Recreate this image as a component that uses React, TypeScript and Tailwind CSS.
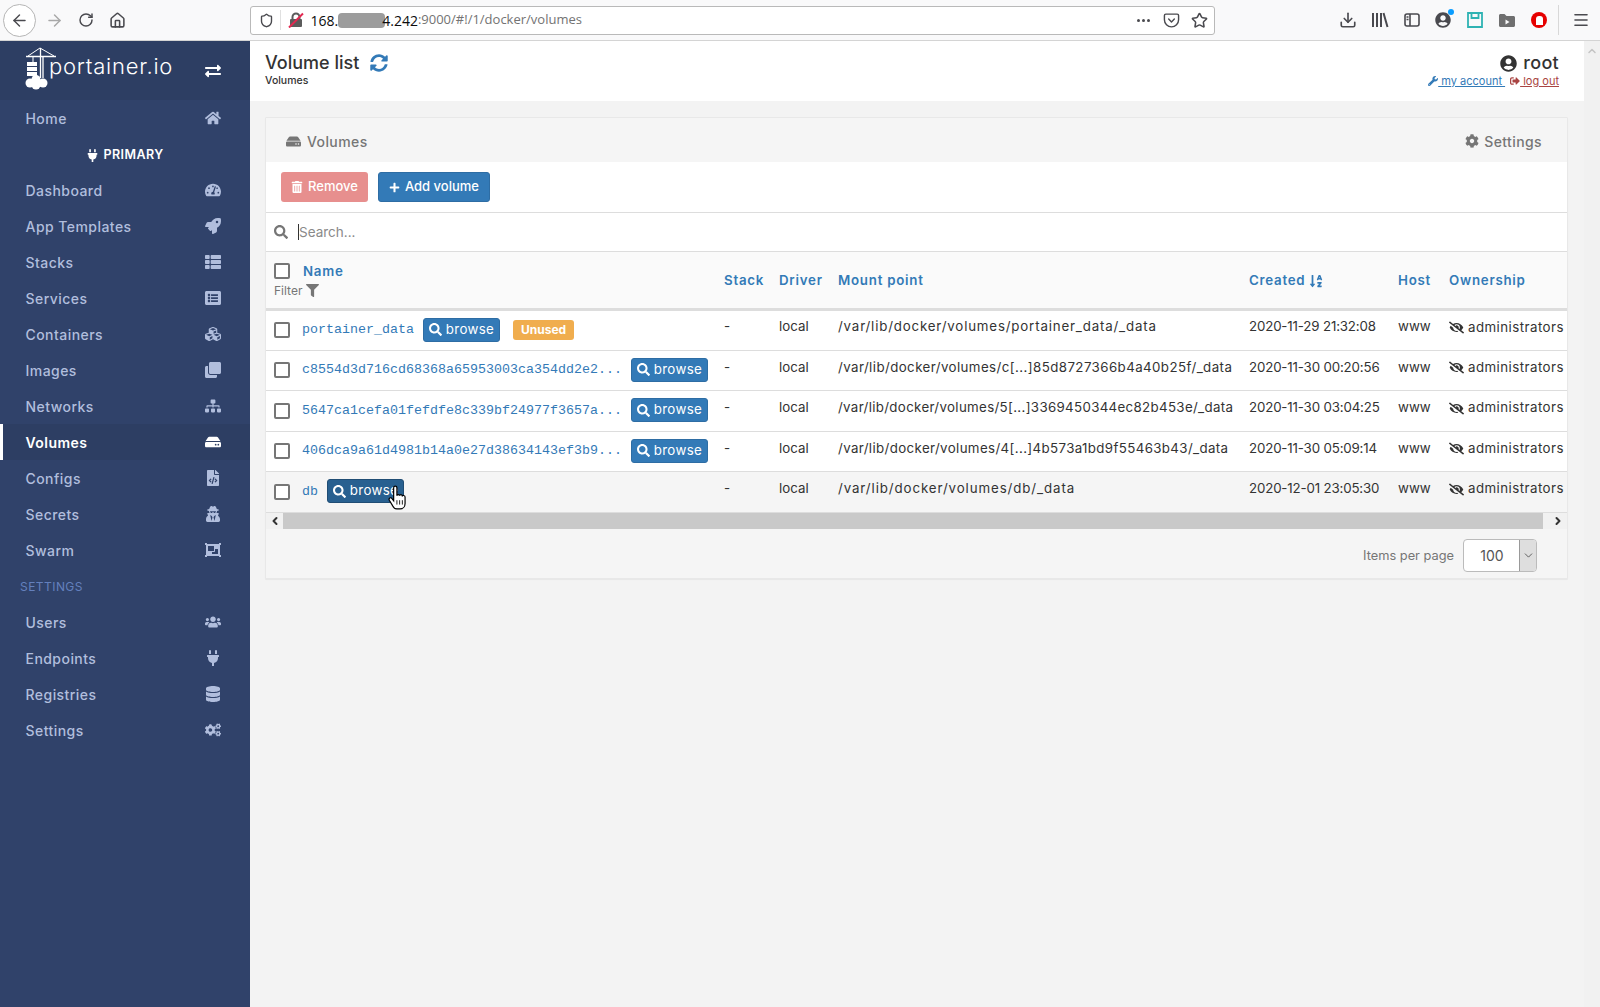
import type { ReactNode } from "react";
import {
  FaCog,
  FaCogs,
  FaClone,
  FaCubes,
  FaDatabase,
  FaExchangeAlt,
  FaEyeSlash,
  FaFileCode,
  FaFilter,
  FaHdd,
  FaHome,
  FaListAlt,
  FaObjectGroup,
  FaPlug,
  FaPlus,
  FaRocket,
  FaSearch,
  FaSignOutAlt,
  FaSitemap,
  FaSortAlphaDown,
  FaSyncAlt,
  FaTachometerAlt,
  FaThList,
  FaTrashAlt,
  FaUserCircle,
  FaUsers,
  FaUserSecret,
  FaWrench,
} from "react-icons/fa";
import {
  ArrowLeft,
  ArrowRight,
  ChevronDown,
  ChevronLeft,
  ChevronRight,
  ChevronUp,
  Download,
  Home,
  Menu,
  Pocket,
  RotateCw,
  Shield,
  Star,
} from "lucide-react";

const navTop = [
  { label: "Dashboard", icon: <FaTachometerAlt /> },
  { label: "App Templates", icon: <FaRocket /> },
  { label: "Stacks", icon: <FaThList /> },
  { label: "Services", icon: <FaListAlt /> },
  { label: "Containers", icon: <FaCubes /> },
  { label: "Images", icon: <FaClone /> },
  { label: "Networks", icon: <FaSitemap /> },
  { label: "Volumes", icon: <FaHdd />, active: true },
  { label: "Configs", icon: <FaFileCode /> },
  { label: "Secrets", icon: <FaUserSecret /> },
  { label: "Swarm", icon: <FaObjectGroup /> },
];

const navBottom = [
  { label: "Users", icon: <FaUsers /> },
  { label: "Endpoints", icon: <FaPlug /> },
  { label: "Registries", icon: <FaDatabase /> },
  { label: "Settings", icon: <FaCogs /> },
];

// mount paths with hex in them run narrower than the plain ones, hence the per-row tracking
const volumes = [
  {
    name: "portainer_data",
    mount: "/var/lib/docker/volumes/portainer_data/_data",
    mountClass: "tracking-[0.82px]",
    created: "2020-11-29 21:32:08",
    unused: true,
    height: "h-[41px]",
    cellPad: "pb-[7px]",
  },
  {
    name: "c8554d3d716cd68368a65953003ca354dd2e2...",
    mount: "/var/lib/docker/volumes/c[...]85d8727366b4a40b25f/_data",
    mountClass: "tracking-[0.42px]",
    created: "2020-11-30 00:20:56",
    height: "h-[40px]",
    cellPad: "pb-[5px]",
  },
  {
    name: "5647ca1cefa01fefdfe8c339bf24977f3657a...",
    mount: "/var/lib/docker/volumes/5[...]3369450344ec82b453e/_data",
    mountClass: "tracking-[0.33px]",
    created: "2020-11-30 03:04:25",
    height: "h-[41px]",
    cellPad: "pb-[5px]",
  },
  {
    name: "406dca9a61d4981b14a0e27d38634143ef3b9...",
    mount: "/var/lib/docker/volumes/4[...]4b573a1bd9f55463b43/_data",
    mountClass: "tracking-[0.37px]",
    created: "2020-11-30 05:09:14",
    height: "h-[40px]",
    cellPad: "pb-[5px]",
  },
  {
    name: "db",
    mount: "/var/lib/docker/volumes/db/_data",
    mountClass: "tracking-[0.9px]",
    created: "2020-12-01 23:05:30",
    hover: true,
    height: "h-[41px]",
    cellPad: "pb-[5px]",
  },
];

function Logo() {
  return (
    <svg width="34" height="46" viewBox="0 0 34 46" className="shrink-0 text-white">
      <path d="M1 9.500 H31" stroke="currentColor" strokeWidth="1.500" />
      <path d="M15 1 L3 9 M15 1 L29 9" fill="none" stroke="currentColor" strokeWidth="1" />
      <path d="M15.500 1 V31 M18 9 V31" fill="none" stroke="currentColor" strokeWidth="1.300" />
      <path d="M8 10 V15" stroke="currentColor" strokeWidth="1" />
      <rect x="2" y="15" width="10" height="4" fill="currentColor" />
      <rect x="2" y="20" width="10" height="4" fill="currentColor" />
      <rect x="2" y="25" width="10" height="4" fill="currentColor" />
      <circle cx="5" cy="36" r="4.500" fill="currentColor" />
      <circle cx="11" cy="32.500" r="4.500" fill="currentColor" />
      <circle cx="18" cy="36" r="4.500" fill="currentColor" />
      <circle cx="11" cy="38" r="4.500" fill="currentColor" />
    </svg>
  );
}

function NavRow({ label, icon, active }: { label: string; icon: ReactNode; active?: boolean }) {
  return (
    <div
      className={
        active
          ? "flex h-9 items-center justify-between border-l-[3px] border-white bg-[#2d3e63] pl-[22.5px] pr-[29px] font-semibold text-white"
          : "flex h-9 items-center justify-between pl-[25.5px] pr-[29px] font-medium text-[#b1bedd]"
      }
    >
      <span>{label}</span>
      <span className="flex w-4 justify-center text-[16px]">{icon}</span>
    </div>
  );
}

function Sidebar() {
  return (
    <aside className="w-[250px] shrink-0 bg-[#30426a] text-[14px] tracking-[0.45px]">
      <div className="flex h-[59px] items-center bg-[#2d3e63] pl-[25px] pr-[29px]">
        <div className="-mt-[1px]">
          <Logo />
        </div>
        <span className="-ml-[10px] -mt-[8px] text-[22px] font-light tracking-[0.75px] text-white">portainer.io</span>
        <span className="ml-auto flex w-4 justify-center text-[18px] text-white">
          <FaExchangeAlt />
        </span>
      </div>
      <NavRow label="Home" icon={<FaHome />} />
      <div className="flex h-9 items-center justify-center gap-1 pt-[2px] text-[12.5px] font-semibold text-white">
        <FaPlug className="text-[13px]" />
        <span>PRIMARY</span>
      </div>
      {navTop.map((item) => (
        <NavRow key={item.label} {...item} />
      ))}
      <div className="flex h-9 items-center pl-[20px] pt-[2px] text-[12px] text-[#6480bd]">SETTINGS</div>
      {navBottom.map((item) => (
        <NavRow key={item.label} {...item} />
      ))}
    </aside>
  );
}

function BrowserBar() {
  return (
    <div className="flex h-[41px] shrink-0 items-center border-b border-[#d4d4d4] bg-[#f9f9fa] pl-[3px] text-[#4a4a4f]">
      <div className="flex h-[33px] w-[33px] items-center justify-center rounded-full border border-[#b5b5b5] bg-white">
        <ArrowLeft size={19} strokeWidth={1.8} />
      </div>
      <ArrowRight size={19} strokeWidth={1.8} className="ml-[9px] text-[#a8a8a8]" />
      <RotateCw size={16} strokeWidth={2.2} className="ml-[14px]" />
      <Home size={17} strokeWidth={2.2} className="ml-[15px]" />
      <div className="ml-[123.5px] flex h-[29px] w-[965px] items-center rounded-[3px] border border-[#b9b9b9] bg-white pl-[8px] pr-[6px] text-[14px]">
        <Shield size={15} strokeWidth={2.2} />
        <div className="ml-[6px] h-5 w-px bg-[#e0e0e0]" />
        <svg width="16" height="16" viewBox="0 0 16 16" className="ml-[7px]">
          <path d="M4.500 7V5a3.500 3.500 0 0 1 7 0v2" fill="none" stroke="#5b5b5b" strokeWidth="2" />
          <rect x="2" y="7" width="12" height="8" rx="1" fill="#5b5b5b" />
          <path d="M1 15.500 L15 1.500" stroke="#e22850" strokeWidth="2" />
        </svg>
        <span className="ml-[7px] flex items-center font-['Open_Sans',sans-serif] text-[14px] text-[#0c0c0d]">
          168.
          <span className="mr-[-3px] inline-block h-[15px] w-[47px] rounded-[4px] bg-[#9c9c9c]" />
          4.242<span className="text-[13px] text-[#737373]">:9000/#!/1/docker/volumes</span>
        </span>
        <span className="ml-auto flex gap-[2px]">
          <i className="h-[3px] w-[3px] rounded-full bg-[#4a4a4f]" />
          <i className="h-[3px] w-[3px] rounded-full bg-[#4a4a4f]" />
          <i className="h-[3px] w-[3px] rounded-full bg-[#4a4a4f]" />
        </span>
        <Pocket size={17} strokeWidth={2} className="ml-[13px]" />
        <Star size={17} strokeWidth={2.2} className="ml-[11px]" />
      </div>
      <Download size={18} strokeWidth={2.2} className="ml-[124.5px]" />
      <svg width="18" height="16" viewBox="0 0 18 16" className="ml-[14px]" fill="none" stroke="currentColor" strokeWidth="2">
        <path d="M2 1v14M6 1v14M10 1v14M12.500 1l4 14" />
      </svg>
      <svg width="16" height="14" viewBox="0 0 16 14" className="ml-[15px]" fill="none" stroke="currentColor" strokeWidth="1.600">
        <rect x="1" y="1" width="14" height="12" rx="2" />
        <path d="M6 1v12M2.500 4h2M2.500 6.500h2" />
      </svg>
      <div className="relative ml-[15px] flex h-4 w-4 items-center justify-center">
        <FaUserCircle className="text-[16px]" />
        <div className="absolute -right-[3px] -top-[3px] h-[6px] w-[6px] rounded-full bg-[#0a9dff]" />
      </div>
      <svg width="16" height="16" viewBox="0 0 16 16" className="ml-[16px]" fill="none" stroke="#2fb3b3" strokeWidth="1.800">
        <path d="M1 1h14v14H1zM4.500 1v5h7V1" />
      </svg>
      <svg width="16" height="13" viewBox="0 0 16 13" className="ml-[16px]" fill="#6f6f6f">
        <path d="M0 1.500C0 .7.700 0 1.500 0h4l2 2h7c.8 0 1.500.7 1.500 1.500v8c0 .8-.7 1.500-1.500 1.500h-13C.7 13 0 12.300 0 11.500z" />
        <path d="M6.500 5.500v5l4-2.500z" fill="#f9f9fa" />
      </svg>
      <div className="ml-[16px] flex h-4 w-4 items-center justify-center rounded-full bg-[#e60000]">
        <div className="h-[9px] w-[7px] rounded-t-[3px] bg-white" />
      </div>
      <div className="ml-[11px] h-[30px] w-px bg-[#d8d8d8]" />
      <Menu size={18} strokeWidth={2.2} className="ml-[13px]" />
    </div>
  );
}

function Browse({ hover }: { hover?: boolean }) {
  return (
    <span
      className={
        hover
          ? "relative inline-flex h-[24px] w-[77px] items-center justify-center gap-[4px] rounded-[3px] border border-[#204d74] bg-[#286090] tracking-[0.35px] text-white"
          : "inline-flex h-[24px] w-[77px] items-center justify-center gap-[4px] rounded-[3px] border border-[#2e6da4] bg-[#337ab7] tracking-[0.35px] text-white"
      }
    >
      <FaSearch className="text-[13px]" />
      browse
      {hover && (
        <svg width="20" height="25" viewBox="2 0 16 23" className="absolute left-[60px] top-[5px]">
          <path
            d="M6 2.500c0-2 3-2 3 0V10c0-1.500 2.500-1.500 2.500 0 0-1.500 2.500-1.500 2.500 0.500 0-1.500 2.500-1 2.500 0.500V17c0 3-2 5-4.500 5H9c-2 0-3-1-4-3l-3-5c-1-2 1.500-3 2.500-1.500L6 14.500z"
            fill="#fff"
            stroke="#000"
            strokeWidth="1.100"
          />
          <path d="M9 14v4M11.500 14v4M14 14v4" stroke="#000" strokeWidth="0.800" />
        </svg>
      )}
    </span>
  );
}

function Checkbox() {
  return <span className="inline-block h-[16px] w-[16px] shrink-0 rounded-[2px] border-2 border-[#767676] bg-white" />;
}

function VolumeTable() {
  return (
    <table className="w-[1321px] table-fixed border-collapse text-left text-[13.3px] text-[#333]">
      <colgroup>
        <col className="w-[450px]" />
        <col className="w-[55px]" />
        <col className="w-[59px]" />
        <col className="w-[411px]" />
        <col className="w-[149px]" />
        <col className="w-[51px]" />
        <col />
      </colgroup>
      <thead>
        <tr className="h-[57px] border-b-[3px] border-[#ddd] bg-[#fafafa] tracking-[0.75px] text-[#337ab7]">
          <th className="pl-2 pt-[2px] font-semibold">
            <div className="flex items-center gap-[13px]">
              <span className="-mt-[2px] flex">
                <Checkbox />
              </span>
              <span>Name</span>
            </div>
            <div className="flex items-center gap-1 text-[12px] font-normal tracking-normal text-[#767676]">
              Filter <FaFilter className="text-[13px]" />
            </div>
          </th>
          <th className="pl-2 pt-[2px] font-semibold">Stack</th>
          <th className="pl-2 pt-[2px] font-semibold">Driver</th>
          <th className="pl-2 pt-[2px] font-semibold">Mount point</th>
          <th className="pl-2 pt-[2px] font-semibold">
            <span className="inline-flex items-center gap-1">
              Created <FaSortAlphaDown className="text-[14px]" />
            </span>
          </th>
          <th className="pl-2 pt-[2px] font-semibold">Host</th>
          <th className="pl-2 pt-[2px] font-semibold">Ownership</th>
        </tr>
      </thead>
      <tbody>
        {volumes.map((v) => (
          <tr key={v.name} className={`${v.height} border-b border-[#ddd] ${v.hover ? "bg-[#f5f5f5]" : "bg-white"}`}>
            <td className="pl-2">
              <div className="flex items-center">
                <Checkbox />
                <span className="ml-[12px] font-['Liberation_Mono',monospace] text-[13.33px] text-[#337ab7]">{v.name}</span>
                <span className="ml-[9px]">
                  <Browse hover={v.hover} />
                </span>
                {v.unused && (
                  <span className="-mt-[1px] ml-[13px] rounded-[3px] bg-[#f0ad4e] px-[8px] py-[1px] text-[12px] font-bold text-white">
                    Unused
                  </span>
                )}
              </div>
            </td>
            <td className={`${v.cellPad} pl-2`}>-</td>
            <td className={`${v.cellPad} pl-2`}>local</td>
            <td className={`whitespace-nowrap ${v.cellPad} pl-2 ${v.mountClass}`}>{v.mount}</td>
            <td className={`whitespace-nowrap ${v.cellPad} pl-2 tracking-[-0.16px]`}>{v.created}</td>
            <td className={`${v.cellPad} pl-2`}>www</td>
            <td className="whitespace-nowrap pb-[1px] pl-2 tracking-[0.45px]">
              <span className="inline-flex items-center gap-1">
                <FaEyeSlash className="text-[15px]" /> administrators
              </span>
            </td>
          </tr>
        ))}
      </tbody>
    </table>
  );
}

function VolumesWidget() {
  return (
    <section className="rounded-[1px] border border-[#e8e8e8] bg-[#f5f5f5] shadow-[0_1px_1px_rgba(0,0,0,0.05)]">
      <div className="flex h-[44px] items-center justify-between pl-[20px] pr-[25px] pt-[2px] text-[14px] font-medium tracking-[0.4px] text-[#767676]">
        <span className="flex items-center gap-[6px]">
          <FaHdd className="text-[15px]" /> Volumes
        </span>
        <span className="flex items-center gap-[5px]">
          <FaCog /> Settings
        </span>
      </div>
      <div className="flex h-[51px] items-center gap-[10px] border-b border-[#ddd] bg-white pl-[15px] text-[13px] font-medium text-white">
        <span className="flex h-[30px] items-center gap-[5px] rounded-[3px] bg-[#e78f8e] px-[10px]">
          <FaTrashAlt className="text-[12px]" /> Remove
        </span>
        <span className="flex h-[30px] items-center gap-[5px] rounded-[3px] border border-[#2e6da4] bg-[#337ab7] px-[10px]">
          <FaPlus className="text-[11px]" /> Add volume
        </span>
      </div>
      <div className="flex h-[39px] items-center border-b border-[#ddd] bg-white pl-2 text-[13.5px] text-[#8a8a8a]">
        <FaSearch className="text-[14px] text-[#767676]" />
        <span className="ml-[10px] h-[16px] w-px bg-[#333]" />
        <span>Search...</span>
      </div>
      <div className="overflow-hidden">
        <VolumeTable />
      </div>
      <div className="flex h-[16px] items-center justify-between bg-[#f1f1f1] text-[#333]">
        <ChevronLeft size={12} strokeWidth={4} className="ml-[3px]" />
        <div className="ml-[2px] mr-[9px] h-full flex-1 bg-[#c9c9c9]" />
        <ChevronRight size={12} strokeWidth={4} className="mr-[3px]" />
      </div>
      <div className="flex h-[49px] items-center justify-end pr-[30px] pt-[5px] text-[12.8px] text-[#767676]">
        <span>Items per page</span>
        <div className="ml-[9px] flex h-[33px] w-[74px] overflow-hidden rounded-[4px] border border-[#bbb] bg-white text-[14px] text-[#555]">
          <span className="flex flex-1 items-center justify-center pl-[1px]">100</span>
          <span className="flex w-[17px] items-center justify-center border-l border-[#999] bg-[#dedede] text-[#444]">
            <ChevronDown size={13} strokeWidth={1.5} />
          </span>
        </div>
      </div>
    </section>
  );
}

export default function App() {
  return (
    <div className="flex h-[1007px] w-[1600px] flex-col overflow-hidden bg-[#f3f3f3] font-['Inter',sans-serif]">
      <BrowserBar />
      <div className="flex min-h-0 flex-1">
        <Sidebar />
        <main className="min-w-0 flex-1">
          <header className="flex h-[60px] items-start justify-between bg-white pl-[15px] pr-[25px]">
            <div className="pt-[11px]">
              <div className="flex items-center gap-[11px] text-[18px] font-medium leading-[22px] text-[#333]">
                Volume list <FaSyncAlt className="text-[18px] text-[#337ab7]" />
              </div>
              <div className="-mt-[1px] text-[10.5px] font-medium text-[#333]">Volumes</div>
            </div>
            <div className="pt-[11px] text-right">
              <div className="flex items-center justify-end gap-[6px] text-[18px] font-medium leading-[22px] tracking-[0.3px] text-[#333]">
                <FaUserCircle className="text-[17px]" /> root
              </div>
              <div className="-mt-[1px] flex items-center justify-end text-[11px]">
                <FaWrench className="text-[10px] text-[#337ab7]" />
                <span className="text-[#337ab7] underline">&nbsp;my account&nbsp;</span>
                <FaSignOutAlt className="ml-[5px] text-[10px] text-[#a94442]" />
                <span className="text-[#a94442] underline">&nbsp;log out</span>
              </div>
            </div>
          </header>
          <div className="pl-[15px] pr-[16px] pt-[16px]">
            <VolumesWidget />
          </div>
        </main>
        <div className="flex w-[16px] shrink-0 justify-center bg-[#f1f1f1] pt-[4px] text-[#c4c4c4]">
          <ChevronUp size={12} strokeWidth={3} />
        </div>
      </div>
    </div>
  );
}
